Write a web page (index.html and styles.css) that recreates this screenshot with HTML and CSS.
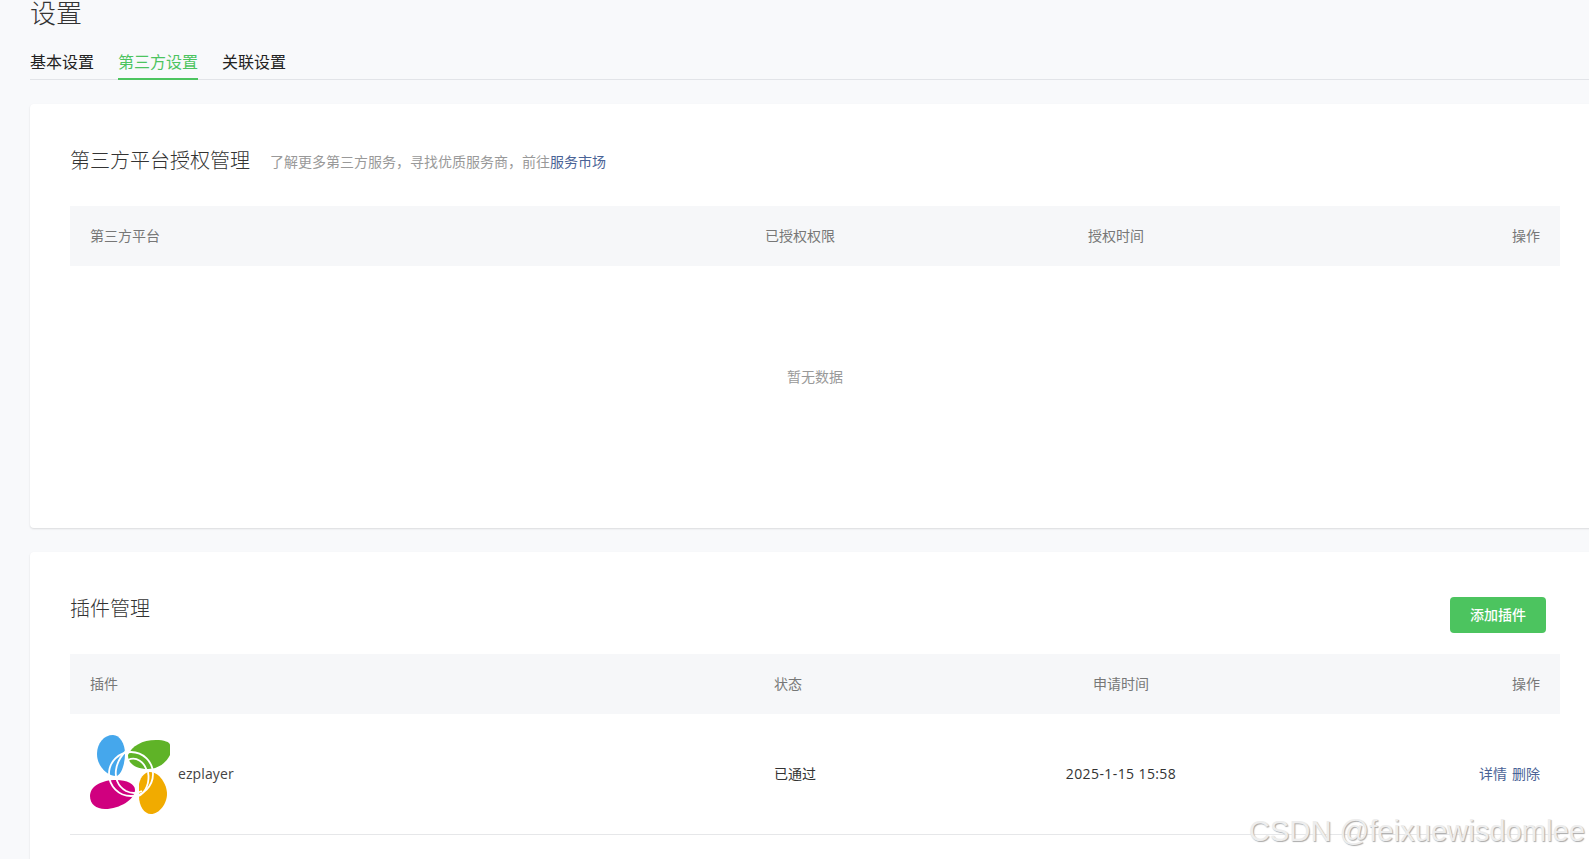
FILE: index.html
```html
<!DOCTYPE html>
<html lang="zh-CN">
<head>
<meta charset="utf-8">
<title>设置</title>
<link rel="stylesheet" href="styles.css">
</head>
<body>
<main class="page">
  <h1 class="page-title">设置</h1>
  <nav class="tabs">
    <a class="tab">基本设置</a>
    <a class="tab tab-active">第三方设置</a>
    <a class="tab">关联设置</a>
  </nav>

  <section class="card card-auth">
    <div class="card-head">
      <h2 class="card-title">第三方平台授权管理</h2>
      <span class="card-sub">了解更多第三方服务，寻找优质服务商，前往<a class="link">服务市场</a></span>
    </div>
    <div class="thead cols-auth">
      <span>第三方平台</span>
      <span>已授权权限</span>
      <span class="center">授权时间</span>
      <span class="right">操作</span>
    </div>
    <div class="empty">暂无数据</div>
  </section>

  <section class="card card-plugin">
    <div class="card-head plugin-head">
      <h2 class="card-title">插件管理</h2>
      <button class="btn">添加插件</button>
    </div>
    <div class="thead cols-plugin">
      <span>插件</span>
      <span>状态</span>
      <span class="center">申请时间</span>
      <span class="right">操作</span>
    </div>
    <div class="row cols-plugin">
      <div class="plugin">
        <svg class="logo" viewBox="0 0 80 80" width="80" height="80" aria-hidden="true">
          <path fill="#45a7ec" d="M23 1C30 1 35 10 35 20C35 30 31 42 26 42C17 42 7 32 7 20C7 9 14 1 23 1Z"/>
          <path fill="#5fb327" d="M38 21C42 12 52 6 66 6C74 6 80 8 80 11L80 21C76 29 68 35 58 35C46 35 38 30 38 21Z"/>
          <path fill="#d0007f" d="M0 62C0 52 12 46 26 46C37 46 45 50 45 56C45 65 30 75 15 75C6 75 0 70 0 62Z"/>
          <path fill="#f1ab00" d="M49 50C51 41 56 38 60 38C69 38 77 50 77 60C77 70 69 80 61 80C54 80 49 72 49 62Z"/>
          <g fill="none" stroke="#fff" stroke-width="1.8">
            <circle cx="41" cy="40" r="22"/>
            <path d="M36 17C32 21 27 28 26 36C25 43 27 52 36 57C42 60 48 59 52 57"/>
            <path d="M38 26C46 22 55 28 57 38"/>
            <path d="M58 38C60 48 56 58 49 62"/>
          </g>
        </svg>
        <span class="plugin-name">ezplayer</span>
      </div>
      <span class="status">已通过</span>
      <span class="center date">2025-1-15 15:58</span>
      <span class="right actions"><a class="link">详情</a><a class="link">删除</a></span>
    </div>
  </section>
</main>
<div class="watermark">CSDN @feixuewisdomlee</div>
</body>
</html>
```
FILE: styles.css
```css
* { box-sizing: border-box; }
html, body { height: 100%; }
body {
  margin: 0;
  overflow: hidden;
  background: #f8f9fb;
  color: #333;
  font-family: "Open Sans", "Noto Sans CJK SC", sans-serif;
  font-size: 14px;
}
.page {
  width: 1620px;
  margin-top: -7px;
  padding-left: 30px;
}
.page-title {
  margin: 0;
  font-size: 26px;
  font-weight: 300;
  line-height: 40px;
  color: #333;
}
.tabs {
  display: flex;
  gap: 24px;
  margin-top: 10px;
  height: 37px;
  border-bottom: 1px solid #e2e4e8;
}
.tab {
  height: 37px;
  font-size: 16px;
  line-height: 38px;
  color: #222;
  border-bottom: 2px solid transparent;
}
.tab-active {
  color: #4cc45f;
  border-bottom-color: #4cc45f;
}
.card {
  margin-top: 24px;
  padding: 0 60px 0 40px;
  background: #fff;
  border-radius: 4px 0 0 4px;
  box-shadow: 0 1px 2px rgba(0, 0, 0, .12);
}
.card-auth { height: 424px; }
.card-plugin { height: 400px; }
.card-head {
  display: flex;
  align-items: center;
  gap: 20px;
  height: 102px;
}
.plugin-head {
  justify-content: space-between;
  padding: 0 14px 0 0;
}
.card-auth .card-head { padding-top: 8px; }
.card-title {
  margin: 0;
  font-size: 20px;
  font-weight: 300;
  line-height: 28px;
  color: #333;
}
.card-auth .card-title { padding-top: 4px; }
.plugin-head .card-title { margin-top: 12px; }
.card-sub { color: #999; margin-top: 3px; }
.link { color: #4a6396; }
.btn {
  width: 96px;
  height: 36px;
  margin-top: 24px;
  padding: 0 0 2px;
  border: 0;
  border-radius: 4px;
  background: #4cc45f;
  color: #fff;
  font: inherit;
  font-weight: 500;
}
.thead, .row {
  display: grid;
  align-items: center;
  padding: 0 20px;
}
.thead {
  height: 60px;
  padding-bottom: 2px;
  background: #f6f7f9;
  color: #777;
}
.cols-auth { grid-template-columns: 675px 240px 222px 1fr; }
.cols-plugin { grid-template-columns: 684px 240px 214px 1fr; }
.center { text-align: center; }
.right { text-align: right; }
.date { letter-spacing: .4px; margin-bottom: 1px; }
.status, .actions { margin-bottom: 2px; }
.actions { display: flex; justify-content: flex-end; gap: 5px; }
.empty {
  height: 220px;
  display: flex;
  align-items: center;
  justify-content: center;
  color: #999;
}
.row {
  height: 121px;
  border-bottom: 1px solid #e6e7e9;
  color: #333;
}
.plugin {
  display: flex;
  align-items: center;
  gap: 8px;
}
.logo { flex: none; margin-bottom: 1px; }
.plugin-name { color: #444; letter-spacing: .1px; margin-bottom: 2px; }
.watermark {
  position: absolute;
  right: 4px;
  bottom: 10px;
  font-family: "Liberation Sans", sans-serif;
  font-size: 29.2px;
  line-height: 36px;
  color: #ededed;
  text-shadow: 1px 1px 1px #aaa;
}
```
